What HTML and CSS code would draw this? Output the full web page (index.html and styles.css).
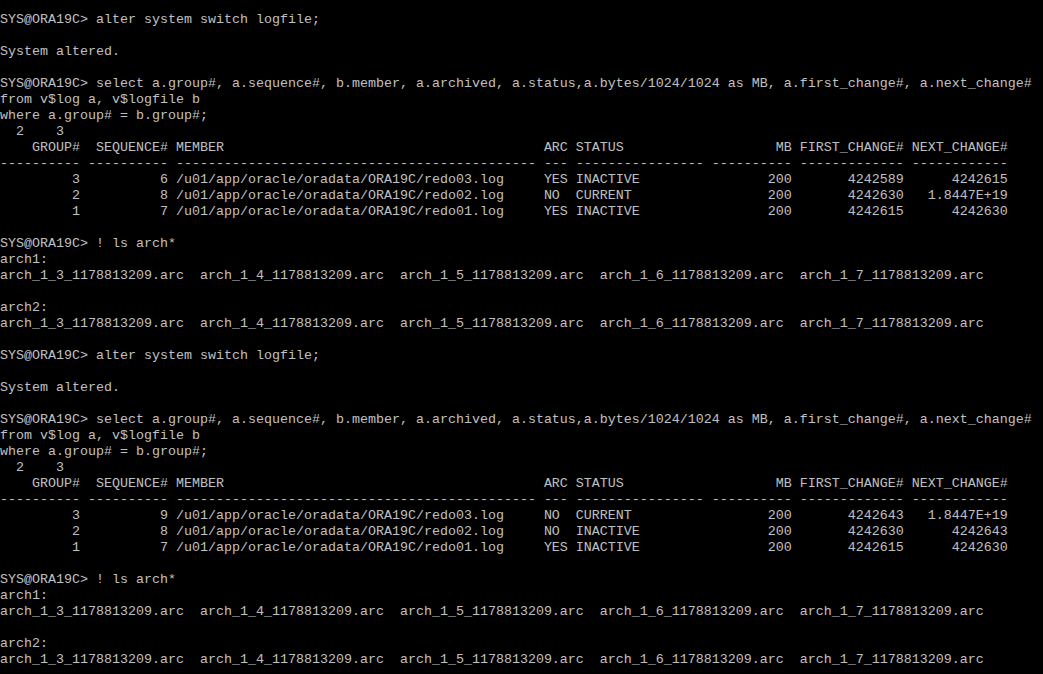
FILE: index.html
```html
<!DOCTYPE html>
<html lang="en">
<head>
<meta charset="utf-8">
<title>SQL*Plus</title>
<link rel="stylesheet" href="styles.css">
</head>
<body>
<pre class="term">SYS@ORA19C&gt; alter system switch logfile;

System altered.

SYS@ORA19C&gt; select a.group#, a.sequence#, b.member, a.archived, a.status,a.bytes/1024/1024 as MB, a.first_change#, a.next_change#
from v$log a, v$logfile b
where a.group# = b.group#;
  2    3
    GROUP#  SEQUENCE# MEMBER                                        ARC STATUS                   MB FIRST_CHANGE# NEXT_CHANGE#
---------- ---------- --------------------------------------------- --- ---------------- ---------- ------------- ------------
         3          6 /u01/app/oracle/oradata/ORA19C/redo03.log     YES INACTIVE                200       4242589      4242615
         2          8 /u01/app/oracle/oradata/ORA19C/redo02.log     NO  CURRENT                 200       4242630   1.8447E+19
         1          7 /u01/app/oracle/oradata/ORA19C/redo01.log     YES INACTIVE                200       4242615      4242630

SYS@ORA19C&gt; ! ls arch*
arch1:
arch_1_3_1178813209.arc  arch_1_4_1178813209.arc  arch_1_5_1178813209.arc  arch_1_6_1178813209.arc  arch_1_7_1178813209.arc

arch2:
arch_1_3_1178813209.arc  arch_1_4_1178813209.arc  arch_1_5_1178813209.arc  arch_1_6_1178813209.arc  arch_1_7_1178813209.arc

SYS@ORA19C&gt; alter system switch logfile;

System altered.

SYS@ORA19C&gt; select a.group#, a.sequence#, b.member, a.archived, a.status,a.bytes/1024/1024 as MB, a.first_change#, a.next_change#
from v$log a, v$logfile b
where a.group# = b.group#;
  2    3
    GROUP#  SEQUENCE# MEMBER                                        ARC STATUS                   MB FIRST_CHANGE# NEXT_CHANGE#
---------- ---------- --------------------------------------------- --- ---------------- ---------- ------------- ------------
         3          9 /u01/app/oracle/oradata/ORA19C/redo03.log     NO  CURRENT                 200       4242643   1.8447E+19
         2          8 /u01/app/oracle/oradata/ORA19C/redo02.log     NO  INACTIVE                200       4242630      4242643
         1          7 /u01/app/oracle/oradata/ORA19C/redo01.log     YES INACTIVE                200       4242615      4242630

SYS@ORA19C&gt; ! ls arch*
arch1:
arch_1_3_1178813209.arc  arch_1_4_1178813209.arc  arch_1_5_1178813209.arc  arch_1_6_1178813209.arc  arch_1_7_1178813209.arc

arch2:
arch_1_3_1178813209.arc  arch_1_4_1178813209.arc  arch_1_5_1178813209.arc  arch_1_6_1178813209.arc  arch_1_7_1178813209.arc</pre>
</body>
</html>
```

FILE: styles.css
```css
html, body {
  margin: 0;
  padding: 0;
  background: #000;
  height: 100%;
  overflow: hidden;
}

.term {
  margin: 0;
  padding: 12px 0 0 0;
  font-family: "Liberation Mono", "Courier New", monospace;
  font-size: 13.333px;
  line-height: 16px;
  color: #c0c0c0;
  white-space: pre;
}
```
